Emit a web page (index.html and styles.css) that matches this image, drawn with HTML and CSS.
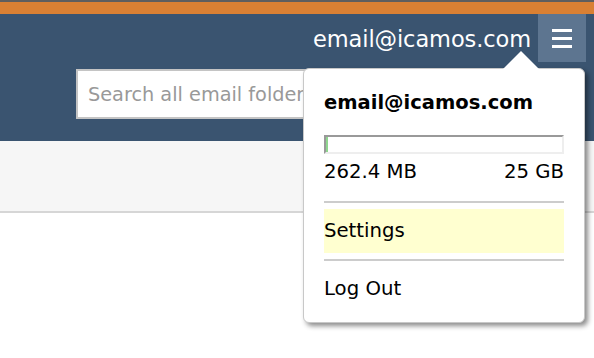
FILE: index.html
```html
<!DOCTYPE html>
<html lang="en">
<head>
    <meta charset="UTF-8">
    <meta name="viewport" content="width=device-width, initial-scale=1.0">
    <title>Mail</title>
    <link rel="stylesheet" href="styles.css">
</head>
<body>
    <div class="stripe"></div>
    <header class="header">
        <div class="user-row">
            <span class="user-email">email@icamos.com</span>
            <button class="menu-button" aria-label="Menu">
                <span></span><span></span><span></span>
            </button>
        </div>
        <div class="search-row">
            <input class="search" type="text" placeholder="Search all email folders">
        </div>
    </header>
    <div class="subbar"></div>

    <div class="user-menu">
        <div class="menu-user">email@icamos.com</div>
        <div class="quota-bar"><div class="quota-fill" style="width: 1%"></div></div>
        <div class="quota-labels">
            <span>262.4 MB</span>
            <span>25 GB</span>
        </div>
        <hr class="menu-sep">
        <a href="#" class="menu-item active">Settings</a>
        <hr class="menu-sep">
        <a href="#" class="menu-item">Log Out</a>
    </div>
</body>
</html>
```

FILE: styles.css
```css
body {
    margin: 0;
    font-family: 'DejaVu Sans', Verdana, sans-serif;
    background: #fff;
    color: #000;
}

.stripe {
    height: 13px;
    background: #d98033;
    border-top: 2px solid #5e5e5e;
}

.header {
    background: #3a5470;
    height: 127px;
}

.user-row {
    display: flex;
    justify-content: flex-end;
    align-items: center;
    gap: 7px;
    padding-right: 8px;
    margin-top: -1px;
}

.user-email {
    color: #fff;
    font-size: 22.5px;
    padding-top: 2px;
    letter-spacing: -0.1px;
}

.menu-button {
    width: 48px;
    height: 48px;
    border: none;
    padding: 0;
    background: #5d7590;
    display: flex;
    flex-direction: column;
    justify-content: center;
    align-items: center;
    gap: 5px;
}

.menu-button span {
    display: block;
    width: 20px;
    height: 3px;
    background: #fff;
}

.search-row {
    padding-left: 76px;
    margin-top: 7px;
}

.search {
    width: 300px;
    height: 50px;
    box-sizing: border-box;
    border: 2px solid #c4c4c4;
    padding: 0 10px;
    font-family: inherit;
    font-size: 19.3px;
    outline: none;
}

.search::placeholder {
    color: #999;
}

.subbar {
    height: 70px;
    background: #f6f6f6;
    border-bottom: 2px solid #d6d6d6;
}

.user-menu {
    position: absolute;
    left: 303px;
    top: 68px;
    width: 240px;
    height: 232px;
    padding: 21px 20px 0 20px;
    background: #fff;
    border: 1px solid #c8c8c8;
    border-radius: 6px;
    box-shadow: 3px 3px 5px rgba(0, 0, 0, 0.45);
}

.user-menu::before {
    content: "";
    position: absolute;
    top: -18px;
    left: 199px;
    border-left: 18px solid transparent;
    border-right: 18px solid transparent;
    border-bottom: 18px solid #fff;
}

.menu-user {
    font-weight: bold;
    font-size: 19.5px;
    line-height: 26px;
}

.quota-bar {
    margin-top: 19px;
    height: 15px;
    border: 2px solid #eee;
    border-top-color: #999;
    border-left-color: #999;
}

.quota-fill {
    height: 100%;
    background: #8fd68f;
}

.quota-labels {
    display: flex;
    justify-content: space-between;
    margin-top: 5px;
    font-size: 19.7px;
    line-height: 26px;
}

.menu-sep {
    margin: 16px 0 0 0;
    border: none;
    height: 2px;
    background: #ccc;
}

.menu-item + .menu-sep {
    margin-top: 6px;
}

.menu-item {
    display: block;
    margin-top: 6px;
    height: 44px;
    line-height: 44px;
    font-size: 19.7px;
    color: #000;
    text-decoration: none;
}

.menu-item.active {
    background: #ffffd0;
}
```
